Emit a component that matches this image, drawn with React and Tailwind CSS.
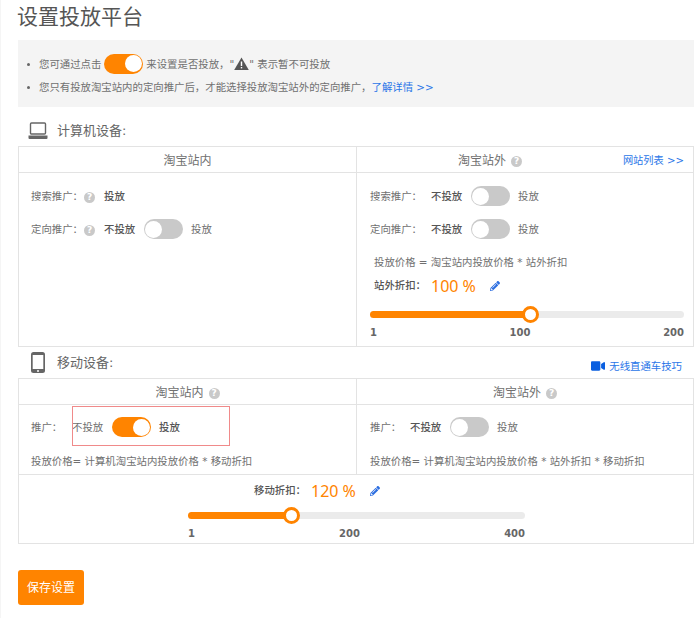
import { FaVideo, FaPencilAlt } from "react-icons/fa";

const LaptopIcon = () => (
  <svg width="20" height="18" viewBox="0 0 20 18" className="text-[#666]">
    <rect x="2.5" y="1" width="15" height="11" rx="1" fill="none" stroke="currentColor" strokeWidth="1.4" />
    <path d="M0.5 13.5h19v2.5a1 1 0 0 1-1 1h-17a1 1 0 0 1-1-1z" fill="currentColor" />
  </svg>
);

const PhoneIcon = () => (
  <svg width="14" height="21" viewBox="0 0 14 21">
    <rect x="0" y="0" width="14" height="21" rx="2.5" fill="#666" />
    <rect x="1.7" y="3" width="10.6" height="14" fill="#fff" />
    <circle cx="7" cy="19" r="1" fill="#fff" />
  </svg>
);

const WarnIcon = () => (
  <svg width="15" height="13" viewBox="0 0 15 13" className="mt-[-2px]">
    <path d="M7.5 0.5L14.8 13H0.2z" fill="#555" />
    <rect x="6.8" y="4.5" width="1.4" height="4.5" fill="#fff" />
    <rect x="6.8" y="10" width="1.4" height="1.4" fill="#fff" />
  </svg>
);

const Help = () => (
  <span className="inline-flex items-center justify-center w-[11px] h-[11px] rounded-full bg-[#c9c9c9] text-white text-[9px] font-bold leading-none">
    ?
  </span>
);

const Toggle = ({ on }) => (
  <span
    className={
      on
        ? "flex justify-end items-center w-[39px] h-[20px] rounded-full p-[1px] bg-[#ff8400]"
        : "flex justify-start items-center w-[39px] h-[20px] rounded-full p-[1px] bg-[#c9c9c9]"
    }
  >
    <span className="w-[17px] h-[17px] rounded-full bg-white" />
  </span>
);

const Slider = ({ percent, labels }) => (
  <div>
    <div className="relative h-[7px] rounded-full bg-[#ebebeb]">
      <div className="h-full rounded-full bg-[#ff8400]" style={{ width: percent + "%" }} />
      <span
        className="absolute top-[-5px] ml-[-8px] w-[17px] h-[17px] rounded-full bg-white border-[3px] border-[#ff8400]"
        style={{ left: percent + "%" }}
      />
    </div>
    <div className="flex justify-between mt-[8px] text-[10px] leading-[14px] font-bold text-[#666]">
      {labels.map((l) => (
        <span key={l}>{l}</span>
      ))}
    </div>
  </div>
);

const SwitchRow = ({ label, labelWidth, help, on }) => (
  <div className="flex items-center h-[20px]">
    <span className={labelWidth}>{label}</span>
    {help && (
      <span className="mr-[9px] flex">
        <Help />
      </span>
    )}
    <span className={on ? "w-[32px]" : "w-[32px] font-medium text-[#555]"}>不投放</span>
    <span className="mx-[8px] mt-[-2px]">
      <Toggle on={on} />
    </span>
    <span className={on ? "font-medium text-[#555]" : ""}>投放</span>
  </div>
);

const Heading = ({ icon, iconBox, text }) => (
  <div className="flex items-center">
    <span className={iconBox}>{icon}</span>
    <span className="text-[13px] text-[#666]">{text}</span>
  </div>
);

export default function App() {
  return (
    <div className="w-[694px] h-[618px] overflow-hidden bg-white border-l border-[#f5f5f5] pl-[17px] text-[10.4px] text-[#707070] font-['DejaVu_Sans','Noto_Sans_CJK_SC',sans-serif]">
      <h1 className="h-[40px] text-[21px] leading-[34px] font-normal text-[#555] ml-[-1px]">设置投放平台</h1>

      <div className="h-[67px] bg-[#f4f4f4] pt-[13px] pl-[9px]">
        <div className="flex items-center h-[23px]">
          <span className="w-[3px] h-[3px] rounded-full bg-[#666] mr-[9px]" />
          <span>您可通过点击</span>
          <span className="mx-[3px] mt-[-2px]">
            <Toggle on />
          </span>
          <span>来设置是否投放，"</span>
          <WarnIcon />
          <span>" 表示暂不可投放</span>
        </div>
        <div className="flex items-center h-[23px]">
          <span className="w-[3px] h-[3px] rounded-full bg-[#666] mr-[9px]" />
          <span>您只有投放淘宝站内的定向推广后，才能选择投放淘宝站外的定向推广，</span>
          <span className="text-[#2a76e8]">了解详情 &gt;&gt;</span>
        </div>
      </div>

      <div className="h-[39px] pt-[14px]">
        <Heading icon={<LaptopIcon />} iconBox="flex w-[39px] pl-[10px]" text="计算机设备:" />
      </div>

      <div className="border border-[#e3e3e3] h-[201px]">
        <div className="grid grid-cols-[338px_1fr] h-[26px] border-b border-[#e3e3e3] text-[12px]">
          <div className="flex items-center justify-center pt-[3px] border-r border-[#e3e3e3]">淘宝站内</div>
          <div className="relative flex items-center justify-center gap-[5px] pt-[3px] pr-[70px]">
            <span>淘宝站外</span>
            <Help />
            <span className="absolute right-[9px] top-[7px] leading-[14px] text-[10.2px] text-[#2a76e8]">网站列表 &gt;&gt;</span>
          </div>
        </div>
        <div className="grid grid-cols-[338px_1fr] h-[173px]">
          <div className="border-r border-[#e3e3e3] pl-[12px] pt-[14px] flex flex-col gap-[13px]">
            <div className="flex items-center h-[20px]">
              <span className="w-[53px]">搜索推广：</span>
              <span className="mr-[9px] flex">
                <Help />
              </span>
              <span className="font-medium text-[#555]">投放</span>
            </div>
            <SwitchRow label="定向推广：" labelWidth="w-[53px]" help />
          </div>
          <div className="pl-[13px] pr-[9px] pt-[14px]">
            <div className="flex flex-col gap-[13px]">
              <SwitchRow label="搜索推广：" labelWidth="w-[61px]" />
              <SwitchRow label="定向推广：" labelWidth="w-[61px]" />
            </div>
            <div className="pl-[4px] mt-[14px] h-[16px] leading-[16px]">投放价格 = 淘宝站内投放价格 * 站外折扣</div>
            <div className="flex items-center pl-[4px] mt-[4px] h-[24px]">
              <span className="w-[57px] font-medium text-[#555]">站外折扣：</span>
              <span className="w-[59px] text-[16px] text-[#ff8400] font-['Noto_Sans',sans-serif]">100 %</span>
              <FaPencilAlt className="text-[10px] text-[#2b6de0]" />
            </div>
            <div className="mt-[13px]">
              <Slider percent={50.8} labels={["1", "100", "200"]} />
            </div>
          </div>
        </div>
      </div>

      <div className="h-[31px] flex items-center justify-between pr-[12px]">
        <Heading icon={<PhoneIcon />} iconBox="flex w-[39px] pl-[13px]" text="移动设备:" />
        <span className="flex items-center gap-[4px] text-[10.4px] text-[#2a76e8] mt-[8px]">
          <FaVideo className="text-[14px] text-[#0a5fe0]" />
          无线直通车技巧
        </span>
      </div>

      <div className="border border-[#e3e3e3] h-[166px]">
        <div className="grid grid-cols-[338px_1fr] h-[26px] border-b border-[#e3e3e3] text-[12px]">
          <div className="flex items-center justify-center gap-[5px] pt-[3px] border-r border-[#e3e3e3]">
            <span>淘宝站内</span>
            <Help />
          </div>
          <div className="flex items-center justify-center gap-[5px] pt-[3px]">
            <span>淘宝站外</span>
            <Help />
          </div>
        </div>
        <div className="grid grid-cols-[338px_1fr] h-[70px] border-b border-[#e3e3e3]">
          <div className="relative border-r border-[#e3e3e3] pl-[12px] pt-[13px]">
            <span className="absolute left-[53px] top-[1px] w-[158px] h-[40px] border border-[#f08a8a]" />
            <SwitchRow label="推广：" labelWidth="w-[41px]" on />
            <div className="mt-[15px] leading-[16px]">投放价格= 计算机淘宝站内投放价格 * 移动折扣</div>
          </div>
          <div className="pl-[13px] pt-[13px]">
            <SwitchRow label="推广：" labelWidth="w-[40px]" />
            <div className="mt-[15px] leading-[16px]">投放价格= 计算机淘宝站内投放价格 * 站外折扣 * 移动折扣</div>
          </div>
        </div>
        <div className="pt-[5px]">
          <div className="flex items-center h-[22px] pl-[235px]">
            <span className="w-[57px] font-medium text-[#555]">移动折扣：</span>
            <span className="w-[59px] text-[16px] text-[#ff8400] font-['Noto_Sans',sans-serif]">120 %</span>
            <FaPencilAlt className="text-[10px] text-[#2b6de0]" />
          </div>
          <div className="w-[337px] ml-[169px] mt-[10px]">
            <Slider percent={30.6} labels={["1", "200", "400"]} />
          </div>
        </div>
      </div>

      <button
        type="button"
        className="block mt-[26px] w-[66px] h-[35px] rounded-[3px] bg-[#ff8400] text-white text-[12px]"
      >
        保存设置
      </button>
    </div>
  );
}
